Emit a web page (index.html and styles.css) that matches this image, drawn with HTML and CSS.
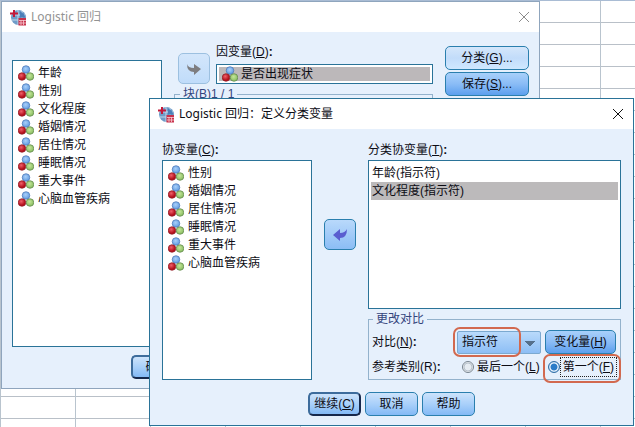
FILE: index.html
```html
<!DOCTYPE html>
<html lang="zh-CN">
<head>
    <meta charset="UTF-8">
    <meta name="viewport" content="width=device-width, initial-scale=1.0">
    <title>Logistic 回归</title>
    <link rel="stylesheet" href="styles.css">
</head>
<body>
    <svg width="0" height="0" class="defs" aria-hidden="true">
        <defs>
            <radialGradient id="blue" cx="45%" cy="40%"><stop offset="0" stop-color="#a9d0fa"/><stop offset="1" stop-color="#6ba3e4"/></radialGradient>
            <radialGradient id="red" cx="40%" cy="35%"><stop offset="0" stop-color="#f0606a"/><stop offset="1" stop-color="#b4101c"/></radialGradient>
            <radialGradient id="green" cx="45%" cy="40%"><stop offset="0" stop-color="#c4e69a"/><stop offset="1" stop-color="#90c268"/></radialGradient>
            <symbol id="nominal" viewBox="0 0 16 16">
                <circle cx="8" cy="4.5" r="3.8" fill="url(#blue)" stroke="#4a74b4" stroke-width=".7"/>
                <circle cx="4" cy="11.5" r="3.8" fill="url(#red)" stroke="#8c2028" stroke-width=".7"/>
                <circle cx="12" cy="11.5" r="3.8" fill="url(#green)" stroke="#5c8248" stroke-width=".7"/>
            </symbol>
            <symbol id="app" viewBox="0 0 17 17">
                <circle cx="8.5" cy="8.5" r="7.5" fill="#6f9cc8"/>
                <path d="M8 1v15M1.5 11h14M12 2v13M3 6h12" stroke="#c3d8ec" stroke-width="1" fill="none"/>
                <path d="M10 2.5q5 2 5 6h-5z" fill="#4b7fb8"/>
                <path d="M4 1v7M0 4.500h8" stroke="#c4193a" stroke-width="2"/>
                <rect x="8.5" y="9" width="7.500" height="7.500" fill="#c8324c"/>
                <path d="M9 11.500h7M9 14h7M11 11v5M13.500 11v5" stroke="#f6cbd2" stroke-width=".8"/>
            </symbol>
        </defs>
    </svg>

    <section class="dialog dialog-main">
        <header class="titlebar">
            <svg class="app-icon"><use href="#app"/></svg>
            <h2>Logistic 回归</h2>
            <button class="close" type="button" aria-label="关闭"><svg viewBox="0 0 12 12"><path d="M1 1l10 10M11 1L1 11"/></svg></button>
        </header>
        <div class="main-body">
            <ul class="list source-list">
                <li><svg><use href="#nominal"/></svg>年龄</li>
                <li><svg><use href="#nominal"/></svg>性别</li>
                <li><svg><use href="#nominal"/></svg>文化程度</li>
                <li><svg><use href="#nominal"/></svg>婚姻情况</li>
                <li><svg><use href="#nominal"/></svg>居住情况</li>
                <li><svg><use href="#nominal"/></svg>睡眠情况</li>
                <li><svg><use href="#nominal"/></svg>重大事件</li>
                <li><svg><use href="#nominal"/></svg>心脑血管疾病</li>
            </ul>
            <div class="target">
                <div class="dependent">
                    <button class="move move-off" type="button" aria-label="移入因变量"><svg viewBox="0 0 16 14"><path d="M1 2q1 4 7 4V2l7 5-7 6V10Q1 10 1 2z"/></svg></button>
                    <div class="dependent-field">
                        <span class="label">因变量(<u>D</u>)<b>:</b></span>
                        <div class="field"><span><svg><use href="#nominal"/></svg>是否出现症状</span></div>
                    </div>
                </div>
                <fieldset class="block">
                    <legend>块(<u>B</u>)1 / 1</legend>
                </fieldset>
            </div>
            <div class="side">
                <button class="btn btn-light" type="button">分类(<u>G</u>)...</button>
                <button class="btn btn-deep" type="button">保存(<u>S</u>)...</button>
            </div>
        </div>
        <footer class="main-footer">
            <button class="btn btn-default" type="button">确定</button>
        </footer>
    </section>

    <section class="dialog dialog-cat">
        <header class="titlebar">
            <svg class="app-icon"><use href="#app"/></svg>
            <h2>Logistic 回归：定义分类变量</h2>
            <button class="close" type="button" aria-label="关闭"><svg viewBox="0 0 12 12"><path d="M1 1l10 10M11 1L1 11"/></svg></button>
        </header>
        <div class="cat-body">
            <div class="covariates">
                <span class="label">协变量(<u>C</u>)<b>:</b></span>
                <ul class="list">
                    <li><svg><use href="#nominal"/></svg>性别</li>
                    <li><svg><use href="#nominal"/></svg>婚姻情况</li>
                    <li><svg><use href="#nominal"/></svg>居住情况</li>
                    <li><svg><use href="#nominal"/></svg>睡眠情况</li>
                    <li><svg><use href="#nominal"/></svg>重大事件</li>
                    <li><svg><use href="#nominal"/></svg>心脑血管疾病</li>
                </ul>
            </div>
            <button class="move" type="button" aria-label="移出"><svg viewBox="0 0 16 14"><path d="M15 1q0 9-7 9v3L1 7l7-6v4q5 0 7-4z"/></svg></button>
            <div class="categorical">
                <span class="label">分类协变量(<u>T</u>)<b>:</b></span>
                <ul class="list plain">
                    <li>年龄(指示符)</li>
                    <li class="selected">文化程度(指示符)</li>
                </ul>
                <fieldset class="contrast">
                    <legend>更改对比</legend>
                    <div class="row">
                        <label class="label" for="contrast">对比(<u>N</u>)<b>:</b></label>
                        <span class="combo">
                            <select id="contrast"><option>指示符</option></select>
                        </span>
                        <button class="btn btn-deep change" type="button">变化量(<u>H</u>)</button>
                    </div>
                    <div class="row row-radios">
                        <span class="label">参考类别(R)<b>:</b></span>
                        <span class="choice">
                            <input type="radio" name="ref" id="last">
                            <label for="last">最后一个(<u>L</u>)</label>
                        </span>
                        <span class="choice marked">
                            <input type="radio" name="ref" id="first" checked>
                            <label class="focused" for="first">第一个(<u>F</u>)</label>
                        </span>
                    </div>
                </fieldset>
            </div>
        </div>
        <footer class="cat-footer">
            <button class="btn btn-default" type="button">继续(<u>C</u>)</button>
            <button class="btn" type="button">取消</button>
            <button class="btn" type="button">帮助</button>
        </footer>
    </section>
</body>
</html>
```
FILE: styles.css
```css
* {
    box-sizing: border-box;
}
body {
    margin: 0;
    min-height: 100vh;
    overflow: hidden;
    position: relative;
    font: 12px/16px "Liberation Sans", "Noto Sans CJK SC", sans-serif;
    color: #0c0c14;
    /* sheet grid behind the dialogs */
    background:
        linear-gradient(#a9bcd4, #a9bcd4) 0 0 / 100% 1px no-repeat,
        linear-gradient(to right, #b9c4ce 1px, transparent 1px) 0 0 / 75px 22px,
        linear-gradient(#b9c0c8 1px, transparent 1px) 0 0 / 75px 22px,
        #fff;
}
.defs {
    position: absolute;
}
ul {
    list-style: none;
    margin: 0;
    padding: 0;
}
button, select {
    font: inherit;
    color: inherit;
}
u {
    text-underline-offset: 1px;
}

/* dialogs */
.dialog {
    position: absolute;
    border: 1px solid #2a7398;
    background: #e6f0fc;
}
.dialog-main {
    left: 1px;
    right: 95px;
    top: 1px;
    border-color: #8fa5bd;
}
.dialog-cat {
    left: 149px;
    right: 1px;
    top: 98px;
}
.titlebar {
    display: flex;
    align-items: center;
    gap: 4px;
    height: 30px;
    padding: 0 9px 0 8px;
    background: #fff;
}
.titlebar h2 {
    flex: 1;
    margin: 0;
    font: 12px/18px "Noto Sans", "Noto Sans CJK SC", sans-serif;
}
.dialog-main h2 {
    color: #929292;
}
.app-icon {
    width: 17px;
    height: 17px;
}
.close {
    width: 12px;
    height: 12px;
    padding: 0;
    border: 0;
    background: none;
    line-height: 0;
}
.close svg {
    width: 12px;
    height: 12px;
    stroke: #111;
    fill: none;
}
.dialog-main .close svg {
    stroke: #8c8c8c;
}

/* lists */
.list {
    padding: 3px 2px 2px;
    border: 1px solid #2a7398;
    background: #fff;
}
.list li {
    display: flex;
    align-items: center;
    gap: 4px;
    height: 18px;
    padding-left: 3px;
}
.list svg, .field svg {
    width: 16px;
    height: 16px;
}
.plain li {
    padding-left: 1px;
}
.selected {
    background: #bcbabb;
}
.label {
    display: block;
    white-space: nowrap;
}

/* buttons */
.btn {
    min-width: 53px;
    height: 24px;
    padding: 0 4px;
    border: 1px solid #2a7fae;
    border-radius: 5px;
    background: linear-gradient(#cde3fb, #a9d0fa 50%, #83b9f5);
    white-space: nowrap;
}
.btn-light {
    background: linear-gradient(#d5e7fb, #c2dcfa 50%, #cfe8ff);
}
.btn-deep {
    background: linear-gradient(#a8d0fa, #8abcf6 50%, #5c9fee);
}
.btn-default {
    border: 2px solid #16284c;
    border-top-color: #3d6c9c;
    border-left-color: #3d6c9c;
    padding: 0 3px;
}
.move {
    width: 32px;
    height: 31px;
    padding: 0;
    border: 1px solid #2a7fae;
    border-radius: 5px;
    background: linear-gradient(#b9d9fb, #8bbdf5);
    line-height: 0;
}
.move svg {
    width: 16px;
    height: 14px;
    fill: #5a5ed0;
}
.move-off {
    border-color: #9cc0e0;
    background: linear-gradient(#d3e6fb, #c0dcfa);
}
.move-off svg {
    fill: #7d7d80;
}

/* regression dialog */
.main-body {
    display: grid;
    grid-template-columns: 150px 1fr 84px;
    gap: 12px;
    padding: 14px 10px 0;
}
.source-list {
    margin-top: 14px;
    min-height: 287px;
}
.target {
    display: flex;
    flex-direction: column;
    gap: 2px;
}
.dependent {
    display: flex;
    align-items: flex-end;
    gap: 6px;
    padding-left: 4px;
    margin-top: -2px;
}
.dependent-field {
    flex: 1;
}
.dependent .label {
    margin-bottom: 4px;
}
.field {
    height: 20px;
    padding: 2px;
    border: 1px solid #2a7398;
    background: #fff;
}
.field span {
    display: flex;
    align-items: center;
    gap: 3px;
    height: 14px;
    padding-left: 3px;
    background: #bcb8ba;
}
fieldset {
    margin: 0;
    min-width: 0;
    border: 1px solid #93b2cc;
}
legend {
    padding: 0 3px;
    color: #34457c;
}
.block {
    flex: 1;
    padding: 0 5px;
}
.side {
    display: flex;
    flex-direction: column;
    gap: 2px;
}
.main-footer {
    padding: 8px 10px 9px 129px;
}

/* categorical covariates dialog */
.cat-body {
    display: grid;
    grid-template-columns: 150px 32px 1fr;
    gap: 12px;
    padding: 13px 12px 0;
}
.covariates, .categorical {
    display: flex;
    flex-direction: column;
    gap: 2px;
}
.covariates .list {
    flex: 1;
}
.cat-body .move {
    margin-top: 77px;
}
.plain {
    min-height: 149px;
}
.contrast {
    padding: 3px 4px 3px 3px;
}
.contrast legend {
    margin-left: 1px;
}
.row {
    display: flex;
    align-items: center;
    gap: 4px;
}
.row-radios {
    gap: 8px;
    margin-top: 4px;
}
.row > .label {
    flex: 1;
}
.combo, .marked {
    position: relative;
}
.combo select {
    display: block;
    width: 84px;
    height: 23px;
    padding: 0 4px;
    appearance: none;
    border: 1px solid #7ba9d0;
    border-radius: 2px;
    background:
        linear-gradient(to bottom left, #55708c 50%, transparent 52%) 67px 9px / 5px 5px no-repeat,
        linear-gradient(to bottom right, #55708c 50%, transparent 52%) 72px 9px / 5px 5px no-repeat,
        linear-gradient(#b9dafb, #8dbef5);
}
.change {
    width: 71px;
}
/* red rings drawn over the controls */
.combo::after, .marked::after {
    content: "";
    position: absolute;
    border: 2px solid #d2694f;
    border-radius: 7px;
    pointer-events: none;
}
.combo::after {
    inset: -4px 20px -3px -4px;
}
.marked::after {
    inset: -4px -5px -7px -5px;
}
.choice {
    display: flex;
    align-items: center;
    gap: 3px;
    white-space: nowrap;
}
.marked {
    gap: 1px;
}
.choice input {
    appearance: none;
    width: 12px;
    height: 12px;
    margin: 0;
    border: 1px solid #76838f;
    border-radius: 50%;
    background: radial-gradient(circle, #e6ecf2 3px, #aebac6 4px, #fff 5px);
}
.choice input:checked {
    border-color: #2f6da4;
    background: radial-gradient(circle, #2b7cc8 3px, #fff 4px, #9cc6ee 5px);
}
.focused {
    padding: 1px 2px;
    outline: 1px dotted #222;
}
.cat-footer {
    display: flex;
    gap: 4px;
    padding: 12px 10px 9px 158px;
}
```
